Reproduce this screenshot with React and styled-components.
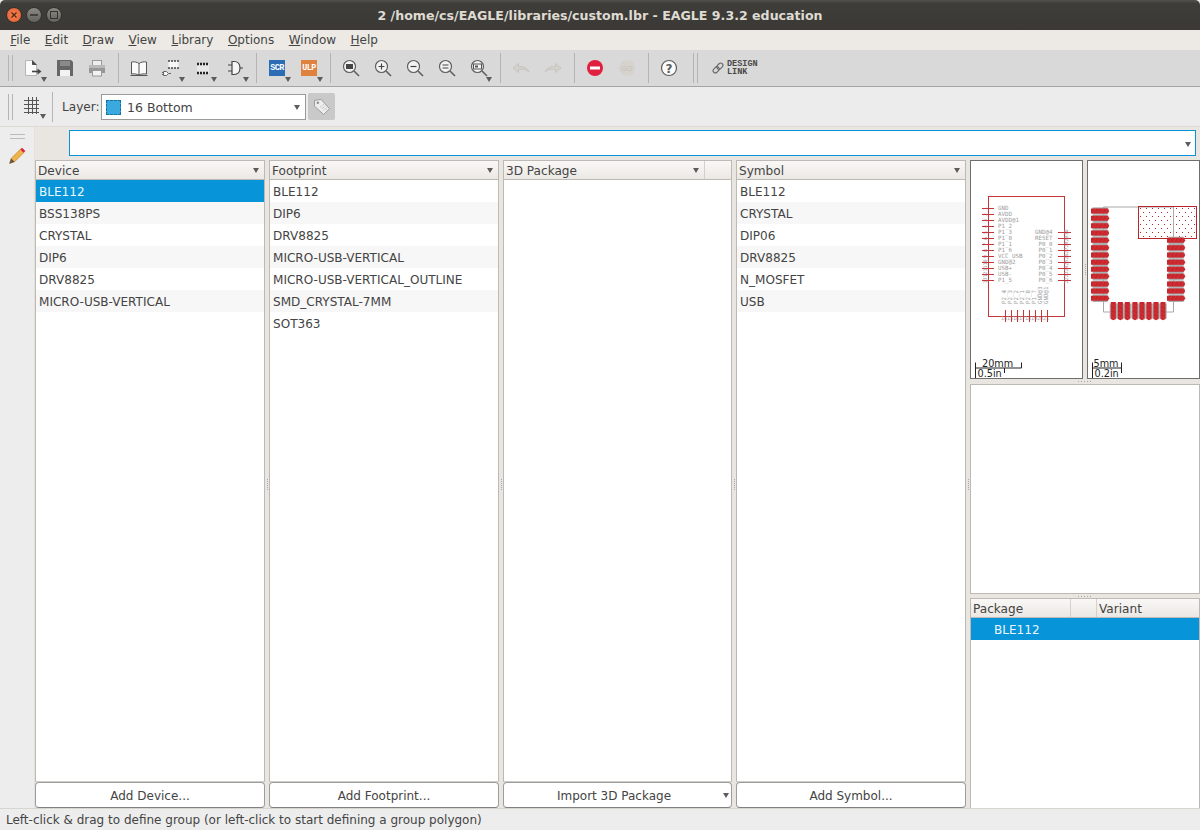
import React from 'react';
import styled, { createGlobalStyle } from 'styled-components';

const Global = createGlobalStyle`
  html, body { margin: 0; padding: 0; background: #ededed; }
  * { box-sizing: border-box; }
  body { font-family: "DejaVu Sans", "Liberation Sans", sans-serif; font-size: 12px; color: #444; }
`

const Shell = styled.div`
  width: 1200px;
  height: 830px;
  display: flex;
  flex-direction: column;
  overflow: hidden;
`

const TitleBar = styled.div`
  height: 30px;
  flex: none;
  display: flex;
  align-items: center;
  padding-left: 6px;
  background: linear-gradient(#52514c, #3e3d39 12%, #3a3935);
  border-radius: 5px 5px 0 0;
`

const WinButton = styled.div`
  width: 16px;
  height: 16px;
  margin-right: 4px;
  border-radius: 50%;
  display: flex;
  align-items: center;
  justify-content: center;
  border: 1px solid #33322e;
  background: ${ props => props.close ? 'radial-gradient(#f28a5a, #e5562a)' : 'linear-gradient(#8a8983, #63625d)' };
`

const Title = styled.div`
  flex: 1;
  text-align: center;
  color: #dfdbd2;
  font-weight: bold;
  font-size: 12.6px;
  margin-left: -4px;
  padding-right: 62px;
  white-space: nowrap;
`

const MenuBar = styled.div`
  height: 20px;
  flex: none;
  display: flex;
  align-items: center;
  padding-left: 3px;
  background: #edeae5;
`

const MenuItem = styled.div`
  padding: 0 7.25px;
  font-size: 12px;
  line-height: 20px;
  color: #444;
  white-space: nowrap;
`

const Toolbar = styled.div`
  height: 37px;
  flex: none;
  display: flex;
  align-items: center;
  padding-left: 8px;
  background: #d9d9d9;
  border-bottom: 1px solid #a3a3a3;
`

const LayerBar = styled.div`
  height: 40px;
  flex: none;
  display: flex;
  align-items: center;
  padding-left: 8px;
  padding-top: 1px;
  background: #ececec;
  border-bottom: 1px solid #dedbd6;
`

const Handle = styled.div`
  width: 5px;
  height: 26px;
  margin-right: 4px;
  flex: none;
  border-left: 1px solid #b4b4b4;
  border-right: 1px solid #b4b4b4;
`

const Sep = styled.div`
  width: 1px;
  height: 30px;
  flex: none;
  margin-left: ${ props => props.left ?? 5 }px;
  margin-right: ${ props => props.right ?? 4 }px;
  background: #b4b4b4;
`

const Tool = styled.div`
  width: 32px;
  height: 32px;
  flex: none;
  position: relative;
  display: flex;
  align-items: center;
  justify-content: center;
`

const Caret = styled.span`
  position: absolute;
  right: ${ props => props.right ?? 2 }px;
  bottom: ${ props => props.bottom ?? 2 }px;
  width: 0;
  height: 0;
  border-left: 3.5px solid transparent;
  border-right: 3.5px solid transparent;
  border-top: 5px solid #5c5c5c;
`

const Arrow = styled(Caret)`
  top: ${ props => props.top }px;
  bottom: auto;
`

const ScriptIcon = styled.div`
  width: 16px;
  height: 16px;
  display: flex;
  align-items: center;
  justify-content: center;
  background: ${ props => props.colour };
  color: #fff;
  font-family: "Liberation Mono", monospace;
  font-weight: bold;
  font-size: 8.5px;
  letter-spacing: -0.6px;
`

const LinkTool = styled.div`
  display: flex;
  align-items: center;
  gap: 3px;
  margin-left: 14px;
`

const LinkText = styled.div`
  font-family: "Liberation Mono", monospace;
  font-weight: bold;
  font-size: 8.5px;
  line-height: 8px;
  color: #4a4a4a;
`

const LayerLabel = styled.div`
  width: 38px;
  margin-left: 7px;
  margin-right: 1px;
  font-size: 12.1px;
  white-space: nowrap;
`

const LayerCombo = styled.div`
  width: 205px;
  height: 26px;
  position: relative;
  display: flex;
  align-items: center;
  padding-left: 4px;
  padding-top: 1px;
  background: #fff;
  border: 1px solid #9a9a9a;
  font-size: 12.5px;
`

const Swatch = styled.span`
  width: 15px;
  height: 15px;
  margin-right: 6px;
  margin-top: -1px;
  background: #3aa9e0;
  border: 1px dashed #17719f;
`

const TagButton = styled.div`
  width: 27px;
  height: 27px;
  margin-left: 2px;
  margin-top: -1px;
  display: flex;
  align-items: center;
  justify-content: center;
  background: #c9c9c9;
  border-radius: 2px;
`

const Body = styled.div`
  flex: 1;
  min-height: 0;
  display: flex;
`

const Dock = styled.div`
  width: 35px;
  flex: none;
  display: flex;
  flex-direction: column;
  align-items: center;
  padding-top: 7px;
  background: #ededed;
  border-right: 1px solid #e4e1dc;
`

const DockHandle = styled.div`
  width: 15px;
  height: 5px;
  flex: none;
  margin-bottom: 7px;
  border-top: 1px solid #bcbcbc;
  border-bottom: 1px solid #bcbcbc;
`

const Main = styled.div`
  flex: 1;
  min-width: 0;
  display: flex;
  flex-direction: column;
  background: #e9e6e1;
`

const CommandRow = styled.div`
  height: 33px;
  flex: none;
  padding: 3px 4px 4px 34px;
`

const CommandInput = styled.div`
  height: 26px;
  position: relative;
  background: #fff;
  border: 1px solid #0a93d6;
`

const Panels = styled.div`
  flex: 1;
  min-height: 0;
  display: flex;
`

const Gutter = styled.div`
  width: 4px;
  flex: none;
  display: flex;
  align-items: center;
  justify-content: center;
`

const VDots = styled.div`
  width: 1px;
  height: 11px;
  background: repeating-linear-gradient(#a8a8a8 0 1px, transparent 1px 2px);
`

const HDots = styled.div`
  width: 15px;
  height: 1px;
  background: repeating-linear-gradient(90deg, #a8a8a8 0 1px, transparent 1px 3px);
`

const Column = styled.div`
  width: ${ props => props.width || 230 }px;
  flex: none;
  display: flex;
  flex-direction: column;
`

const ListBox = styled.div`
  flex: 1;
  min-height: 0;
  background: #fff;
  border: 1px solid #bdbab5;
  border-bottom-color: #d0cdc8;
  display: flex;
  flex-direction: column;
`

const Header = styled.div`
  height: 19px;
  flex: none;
  display: flex;
  background: linear-gradient(#faf8f6, #ebe8e4);
  border-bottom: 1px solid #bdbab5;
`

const HeaderCell = styled.div`
  position: relative;
  width: ${ props => props.width ? props.width + 'px' : 'auto' };
  flex: ${ props => props.width ? 'none' : 1 };
  padding-left: 2px;
  padding-top: 1px;
  line-height: 19px;
  font-size: 12.1px;
  color: #444;
  border-left: ${ props => props.divider ? '1px solid #d3d0cb' : 'none' };
`

const Row = styled.div`
  height: 22px;
  flex: none;
  padding-left: ${ props => props.indent || 3 }px;
  padding-top: 1px;
  line-height: 22px;
  font-size: 12.05px;
  white-space: nowrap;
  color: ${ props => props.selected ? '#e8f5fc' : '#444' };
  background: ${ props => props.selected ? '#0894d8' : props.striped ? '#f7f7f7' : '#fff' };
`

const FooterButton = styled.div`
  height: 26px;
  flex: none;
  position: relative;
  display: flex;
  align-items: center;
  justify-content: center;
  padding-top: 1px;
  padding-right: ${ props => props.menu ? 7 : 0 }px;
  background: #fff;
  border: 1px solid #9c9c9c;
  border-bottom-color: #808080;
  border-radius: 4px;
  font-size: 12px;
`

const Side = styled.div`
  width: 230px;
  flex: none;
  display: flex;
  flex-direction: column;
`

const PreviewRow = styled.div`
  height: 219px;
  flex: none;
  display: flex;
`

const PreviewBox = styled.div`
  width: 113px;
  flex: none;
  background: #fff;
  border: 1px solid #6e6e6e;
  overflow: hidden;
`

const HSplit = styled.div`
  height: ${ props => props.height }px;
  flex: none;
  display: flex;
  align-items: center;
  justify-content: center;
`

const EmptyBox = styled.div`
  height: 210px;
  flex: none;
  background: #fff;
  border: 1px solid #bdbab5;
`

const PackageTable = styled(ListBox)`
  border-bottom: none;
`

const StatusBar = styled.div`
  height: 22px;
  flex: none;
  padding-left: 6px;
  padding-top: 1px;
  line-height: 21px;
  font-size: 12px;
  white-space: nowrap;
  background: #ededed;
  border-top: 1px solid #d8d5d0;
`

const Svg = styled.svg`
  display: block;
`

const PinLabel = styled.text`
  font-family: "DejaVu Sans Mono", monospace;
  font-size: ${ props => props.size || 5.8 }px;
  fill: #9c9c9c;
`

const ScaleText = styled.text`
  font-size: 9.7px;
  fill: #222;
`

const Icon = ({ children, size = 24 }) => (
  <Svg width={ size } height={ size } viewBox="0 0 24 24" fill="none">{ children }</Svg>
);

const Magnifier = ({ children }) => (
  <Icon>
    <circle cx="10.5" cy="10.5" r="6" fill="#f3f3f3" stroke="#5e5e5e" strokeWidth="1.2" />
    <path d="M15 15l5 5" stroke="#5e5e5e" strokeWidth="1.6" />
    { children }
  </Icon>
);

const Tools = () => (
  <>
    <Tool>
      <Icon>
        <path d="M4.500 4.500h7l4 4v11h-11z" fill="#fbfbfb" stroke="#b5b5b5" />
        <path d="M11.500 4.500v4h4" fill="#4a4a4a" stroke="#4a4a4a" />
        <path d="M11 15.500h6" stroke="#454545" strokeWidth="1.600" />
        <path d="M16.500 12.500l4 3-4 3z" fill="#454545" />
      </Icon>
      <Caret />
    </Tool>
    <Tool>
      <Icon>
        <path d="M4 4h14l2 2v14H4z" fill="#666" />
        <rect x="7" y="5" width="10" height="5" fill="#8a8a8a" />
        <rect x="7" y="14" width="10" height="6" fill="#f2f2f2" />
      </Icon>
    </Tool>
    <Tool>
      <Icon>
        <rect x="7.500" y="4.500" width="9" height="5" fill="#eee" stroke="#9a9a9a" />
        <path d="M4 9h16v8h-16z" fill="#979797" />
        <rect x="4" y="9" width="16" height="3" fill="#b9b9b9" />
        <rect x="7.500" y="14.500" width="9" height="5.500" fill="#f3f3f3" stroke="#9a9a9a" />
      </Icon>
    </Tool>
    <Sep />
    <Tool>
      <Icon>
        <path d="M12 7.500C10 6 7 5.500 4.500 6v12c2.500-.5 5.500 0 7.500 1 2-1 5-1.500 7.500-1V6c-2.500-.5-5.500 0-7.500 1.500z" fill="#fafafa" stroke="#555" />
        <path d="M12 7.500V19M3.500 19.500h17" stroke="#555" />
      </Icon>
    </Tool>
    <Tool>
      <Icon>
        <rect x="9.500" y="5" width="10" height="7" fill="#f6f6f6" />
        <path d="M9 5h11M9 12h11" stroke="#444" strokeWidth="1.500" strokeDasharray="2 1" />
        <path d="M4.500 15.500h3l2 2-2 2h-3z" fill="#f5f5f5" stroke="#666" />
        <path d="M9.500 17.500h2.500M3 16.500h1.500M3 18.500h1.500" stroke="#666" />
      </Icon>
      <Caret />
    </Tool>
    <Tool>
      <Icon>
        <rect x="6" y="8" width="12" height="9" fill="#e8e8e8" />
        <path d="M6 8h12M6 17h12" stroke="#222" strokeWidth="2.500" strokeDasharray="2 1" />
      </Icon>
      <Caret />
    </Tool>
    <Tool>
      <Icon>
        <path d="M9 5.500h2c4 0 6 3 6 6.500s-2 6.500-6 6.500H9z" fill="#f6f6f6" stroke="#444" strokeWidth="1.200" />
        <path d="M5 9h4M5 15h4M17 12h3" stroke="#444" />
      </Icon>
      <Caret />
    </Tool>
    <Sep />
    <Tool>
      <ScriptIcon colour="#2b6db5">SCR</ScriptIcon>
      <Caret />
    </Tool>
    <Tool>
      <ScriptIcon colour="#e0823f">ULP</ScriptIcon>
      <Caret />
    </Tool>
    <Sep />
    <Tool>
      <Magnifier><rect x="7" y="8" width="7" height="5" fill="#444" /></Magnifier>
    </Tool>
    <Tool>
      <Magnifier><path d="M7.500 10.500h6M10.500 7.500v6" stroke="#444" strokeWidth="1.200" /></Magnifier>
    </Tool>
    <Tool>
      <Magnifier><path d="M7.500 10.500h6" stroke="#444" strokeWidth="1.200" /></Magnifier>
    </Tool>
    <Tool>
      <Magnifier><path d="M7.500 9h6M7.500 12h6" stroke="#444" /></Magnifier>
    </Tool>
    <Tool>
      <Magnifier>
        <rect x="6.500" y="8" width="8" height="5" fill="#f3f3f3" stroke="#555" />
        <rect x="8" y="9.500" width="3" height="2" fill="#555" />
      </Magnifier>
      <Caret right={ 3 } />
    </Tool>
    <Sep />
    <Tool>
      <Icon>
        <path d="M4 12l5.500-4.500v2.800c4.500 0 9 1.500 10.500 5.700-2.500-2.500-6-3-10.500-2.900v3.400z" fill="#d2d1cc" stroke="#c6c5c0" />
      </Icon>
    </Tool>
    <Tool>
      <Icon>
        <path d="M20 12l-5.500-4.500v2.800c-4.500 0-9 1.500-10.500 5.700 2.500-2.500 6-3 10.500-2.900v3.400z" fill="#d2d1cc" stroke="#c6c5c0" />
      </Icon>
    </Tool>
    <Sep />
    <Tool>
      <Icon>
        <circle cx="12" cy="12" r="8" fill="#e0203f" />
        <rect x="7" y="10.500" width="10" height="3" fill="#fff" />
      </Icon>
    </Tool>
    <Tool>
      <Icon>
        <circle cx="12" cy="12" r="8" fill="#d6d2cc" />
        <text x="12" y="14.500" textAnchor="middle" fontSize="7" fill="#c4c0ba" fontFamily="Liberation Sans">GO</text>
      </Icon>
    </Tool>
    <Sep />
    <Tool>
      <Icon>
        <circle cx="12" cy="12" r="7.500" fill="#fbfbfb" stroke="#5c5c5c" strokeWidth="1.200" />
        <text x="12" y="16.500" textAnchor="middle" fontSize="12" fontWeight="bold" fill="#5c5c5c" fontFamily="DejaVu Sans">?</text>
      </Icon>
    </Tool>
    <Sep left={ 8 } right={ 3 } />
    <Sep left={ 0 } right={ 0 } />
    <LinkTool>
      <Icon size={ 12 }>
        <g transform="rotate(-45 12 12)" stroke="#666" strokeWidth="2.200" fill="none">
          <rect x="0" y="7.500" width="13.500" height="9" rx="4.500" />
          <rect x="10.500" y="7.500" width="13.500" height="9" rx="4.500" />
        </g>
      </Icon>
      <LinkText>DESIGN<br />LINK</LinkText>
    </LinkTool>
  </>
);

const leftPins = ['GND', 'AVDD', 'AVDD@1', 'P1_2', 'P1_3', 'P1_0', 'P1_1', 'P1_6', 'VCC_USB', 'GND@2', 'USB+', 'USB-', 'P1_5'];
const rightPins = ['GND@4', 'RESET', 'P0_0', 'P0_1', 'P0_2', 'P0_3', 'P0_4', 'P0_5', 'P0_6'];
const bottomPins = ['P2_4', 'P2_3', 'P2_2', 'P2_1', 'P2_0', 'P1_7', 'GND@3', 'GND@1'];

const SymbolPreview = () => (
  <Svg width="111" height="217" viewBox="971 161 111 217">
    <rect x="988.500" y="196.500" width="76" height="120" stroke="#c8353a" fill="none" />
    { leftPins.map((name, i) => (
      <g key={ name }>
        <PinLabel x="998" y={ 210 + i * 6 }>{ name }</PinLabel>
        <PinLabel size={ 5 } textAnchor="middle" transform={ `translate(987 ${ 208.500 + i * 6 }) rotate(-90)` }>{ i + 1 }</PinLabel>
        <path d={ `M982 ${ 208.500 + i * 6 }h12` } stroke="#c8353a" />
      </g>
    )) }
    { rightPins.map((name, i) => (
      <g key={ name }>
        <PinLabel x="1052.500" y={ 234 + i * 6 } textAnchor="end">{ name }</PinLabel>
        <PinLabel size={ 5 } textAnchor="middle" transform={ `translate(1068 ${ 232.500 + i * 6 }) rotate(-90)` }>{ 30 - i }</PinLabel>
        <path d={ `M1058 ${ 232.500 + i * 6 }h13` } stroke="#c8353a" />
      </g>
    )) }
    { bottomPins.map((name, i) => (
      <g key={ name }>
        <PinLabel transform={ `translate(${ 1006 + i * 6 } 304) rotate(-90)` }>{ name }</PinLabel>
        <PinLabel size={ 5 } x={ 1001 + i * 6 } y="320">{ 14 + i }</PinLabel>
        <path d={ `M${ 1005.500 + i * 6 } 310v12` } stroke="#c8353a" />
      </g>
    )) }
    <path d="M975.500 362.500v5.500h46v-5.500M1004.500 368v5M975.500 368v10" stroke="#222" fill="none" />
    <ScaleText x="982" y="366.500">20mm</ScaleText>
    <ScaleText x="977.500" y="376.500">0.5in</ScaleText>
  </Svg>
);

const leftPads = [168, 190, 212, 234, 256, 278, 300, 322, 343, 364, 387, 408, 430];
const rightPads = [256, 278, 300, 322, 343, 364, 387, 408, 430];
const bottomPads = [445, 466, 487, 510, 531, 552, 573, 594];

const Pad = ({ cx, cy, vertical }) => (
  <g transform={ `translate(${ cx } ${ cy })${ vertical ? ' rotate(90)' : '' }` }>
    <rect x="-7.500" y="-3.600" width="15" height="7.200" fill="#a8a8a8" />
    <path d="M-9 -2.500h17l1.200 2.500-1.200 2.500h-17z" fill="#c8262c" />
    <path d="M-7 2.500l3-5M-3 2.500l3-5M1 2.500l3-5M5 2.500l3-5" stroke="#d84448" strokeWidth=".5" />
  </g>
);

const PackagePreview = () => (
  <Svg width="111" height="217" viewBox="1088 161 111 217">
    <defs>
      <pattern id="keepout" width="6" height="8" patternUnits="userSpaceOnUse" x="1140" y="208">
        <rect width="1" height="1" fill="#b8262c" />
        <rect x="3" y="4" width="1" height="1" fill="#b8262c" />
      </pattern>
    </defs>
    <path d="M1103.500 207v105h70V207z" stroke="#a8a8a8" fill="none" />
    <rect x="1138.500" y="206.500" width="58" height="32" fill="url(#keepout)" stroke="#b8262c" />
    <path d="M1173.500 207v31" stroke="#a8a8a8" />
    { leftPads.map(y => <Pad key={ y } cx={ 1100 } cy={ 155 + y / 3 } />) }
    { rightPads.map(y => <Pad key={ y } cx={ 1176 } cy={ 155 + y / 3 } />) }
    { bottomPads.map(x => <Pad key={ x } cx={ 965 + x / 3 } cy={ 311 } vertical />) }
    <path d="M1092.500 362.500v5.500h29v-5.500M1121.500 368v5M1092.500 368v10" stroke="#222" fill="none" />
    <ScaleText x="1093.500" y="366.500">5mm</ScaleText>
    <ScaleText x="1094.500" y="376.500">0.2in</ScaleText>
  </Svg>
);

const columns = [
  {
    title: 'Device',
    rows: ['BLE112', 'BSS138PS', 'CRYSTAL', 'DIP6', 'DRV8825', 'MICRO-USB-VERTICAL'],
    button: 'Add Device...',
    selected: 0,
  },
  {
    title: 'Footprint',
    rows: ['BLE112', 'DIP6', 'DRV8825', 'MICRO-USB-VERTICAL', 'MICRO-USB-VERTICAL_OUTLINE', 'SMD_CRYSTAL-7MM', 'SOT363'],
    button: 'Add Footprint...',
  },
  {
    title: '3D Package',
    rows: [],
    button: 'Import 3D Package',
    width: 229,
    extra: true,
  },
  {
    title: 'Symbol',
    rows: ['BLE112', 'CRYSTAL', 'DIP06', 'DRV8825', 'N_MOSFET', 'USB'],
    button: 'Add Symbol...',
  },
];

const menus = [['F', 'ile'], ['E', 'dit'], ['D', 'raw'], ['V', 'iew'], ['L', 'ibrary'], ['O', 'ptions'], ['W', 'indow'], ['H', 'elp']];

export default function App() {
  return (
    <Shell>
      <Global />
      <TitleBar>
        <WinButton close>
          <Svg width="8" height="8" viewBox="0 0 8 8"><path d="M1.500 1.500l5 5M6.500 1.500l-5 5" stroke="#5a2410" strokeWidth="1.300" /></Svg>
        </WinButton>
        <WinButton>
          <Svg width="8" height="8" viewBox="0 0 8 8"><path d="M0 4h8" stroke="#33322e" strokeWidth="1.500" /></Svg>
        </WinButton>
        <WinButton>
          <Svg width="8" height="8" viewBox="0 0 8 8"><rect x=".5" y=".5" width="7" height="7" stroke="#33322e" fill="none" /></Svg>
        </WinButton>
        <Title>2 /home/cs/EAGLE/libraries/custom.lbr - EAGLE 9.3.2 education</Title>
      </TitleBar>
      <MenuBar>
        { menus.map(([key, rest]) => <MenuItem key={ key }><u>{ key }</u>{ rest }</MenuItem>) }
      </MenuBar>
      <Toolbar>
        <Handle />
        <Tools />
      </Toolbar>
      <LayerBar>
        <Handle />
        <Tool>
          <Icon>
            <path d="M7.500 2v17M11.500 2v17M15.500 2v17M3 5.500h15M3 9.500h15M3 13.500h15M3 17.500h15" stroke="#555" />
          </Icon>
          <Caret right={ 3 } bottom={ 4 } />
        </Tool>
        <Sep left={ 3 } right={ 2 } />
        <LayerLabel>Layer:</LayerLabel>
        <LayerCombo>
          <Swatch />
          16 Bottom
          <Arrow right={ 5 } top={ 10 } />
        </LayerCombo>
        <TagButton>
          <Icon size={ 20 }>
            <path d="M3 4l8-1 10 11-7 7L3 11z" fill="#eee" stroke="#8f8f8f" />
            <circle cx="7" cy="7" r="1.500" fill="#8f8f8f" />
            <path d="M10 12l4-3M12 14l4-3M14 16l4-3" stroke="#999" strokeDasharray="1 1" />
          </Icon>
        </TagButton>
      </LayerBar>
      <Body>
        <Dock>
          <DockHandle />
          <Icon size={ 20 }>
            <path d="M3 21l2-6L16 4l4 4L9 19z" fill="#efb34a" stroke="#c98d2b" />
            <path d="M3 21l2-6 4 4z" fill="#555" />
            <path d="M16 4l2-2 4 4-2 2z" fill="#e0203f" />
          </Icon>
        </Dock>
        <Main>
          <CommandRow>
            <CommandInput>
              <Arrow right={ 4 } top={ 11 } />
            </CommandInput>
          </CommandRow>
          <Panels>
            { columns.map(col => (
              <React.Fragment key={ col.title }>
                <Column width={ col.width }>
                  <ListBox>
                    <Header>
                      <HeaderCell>
                        { col.title }
                        <Arrow right={ 5 } top={ 7 } />
                      </HeaderCell>
                      { col.extra && <HeaderCell width={ 27 } divider /> }
                    </Header>
                    { col.rows.map((row, i) => (
                      <Row key={ row } selected={ col.selected === i } striped={ i % 2 === 1 }>{ row }</Row>
                    )) }
                  </ListBox>
                  <FooterButton menu={ col.extra }>
                    { col.button }
                    { col.extra && <Arrow right={ 2 } top={ 10 } /> }
                  </FooterButton>
                </Column>
                <Gutter><VDots /></Gutter>
              </React.Fragment>
            )) }
            <Side>
              <PreviewRow>
                <PreviewBox><SymbolPreview /></PreviewBox>
                <Gutter><VDots /></Gutter>
                <PreviewBox><PackagePreview /></PreviewBox>
              </PreviewRow>
              <HSplit height={ 5 }><HDots /></HSplit>
              <EmptyBox />
              <HSplit height={ 4 }><HDots /></HSplit>
              <PackageTable>
                <Header>
                  <HeaderCell width={ 99 }>Package</HeaderCell>
                  <HeaderCell width={ 26 } divider />
                  <HeaderCell divider>Variant</HeaderCell>
                </Header>
                <Row selected indent={ 23 }>BLE112</Row>
              </PackageTable>
            </Side>
          </Panels>
        </Main>
      </Body>
      <StatusBar>Left-click &amp; drag to define group (or left-click to start defining a group polygon)</StatusBar>
    </Shell>
  );
}
